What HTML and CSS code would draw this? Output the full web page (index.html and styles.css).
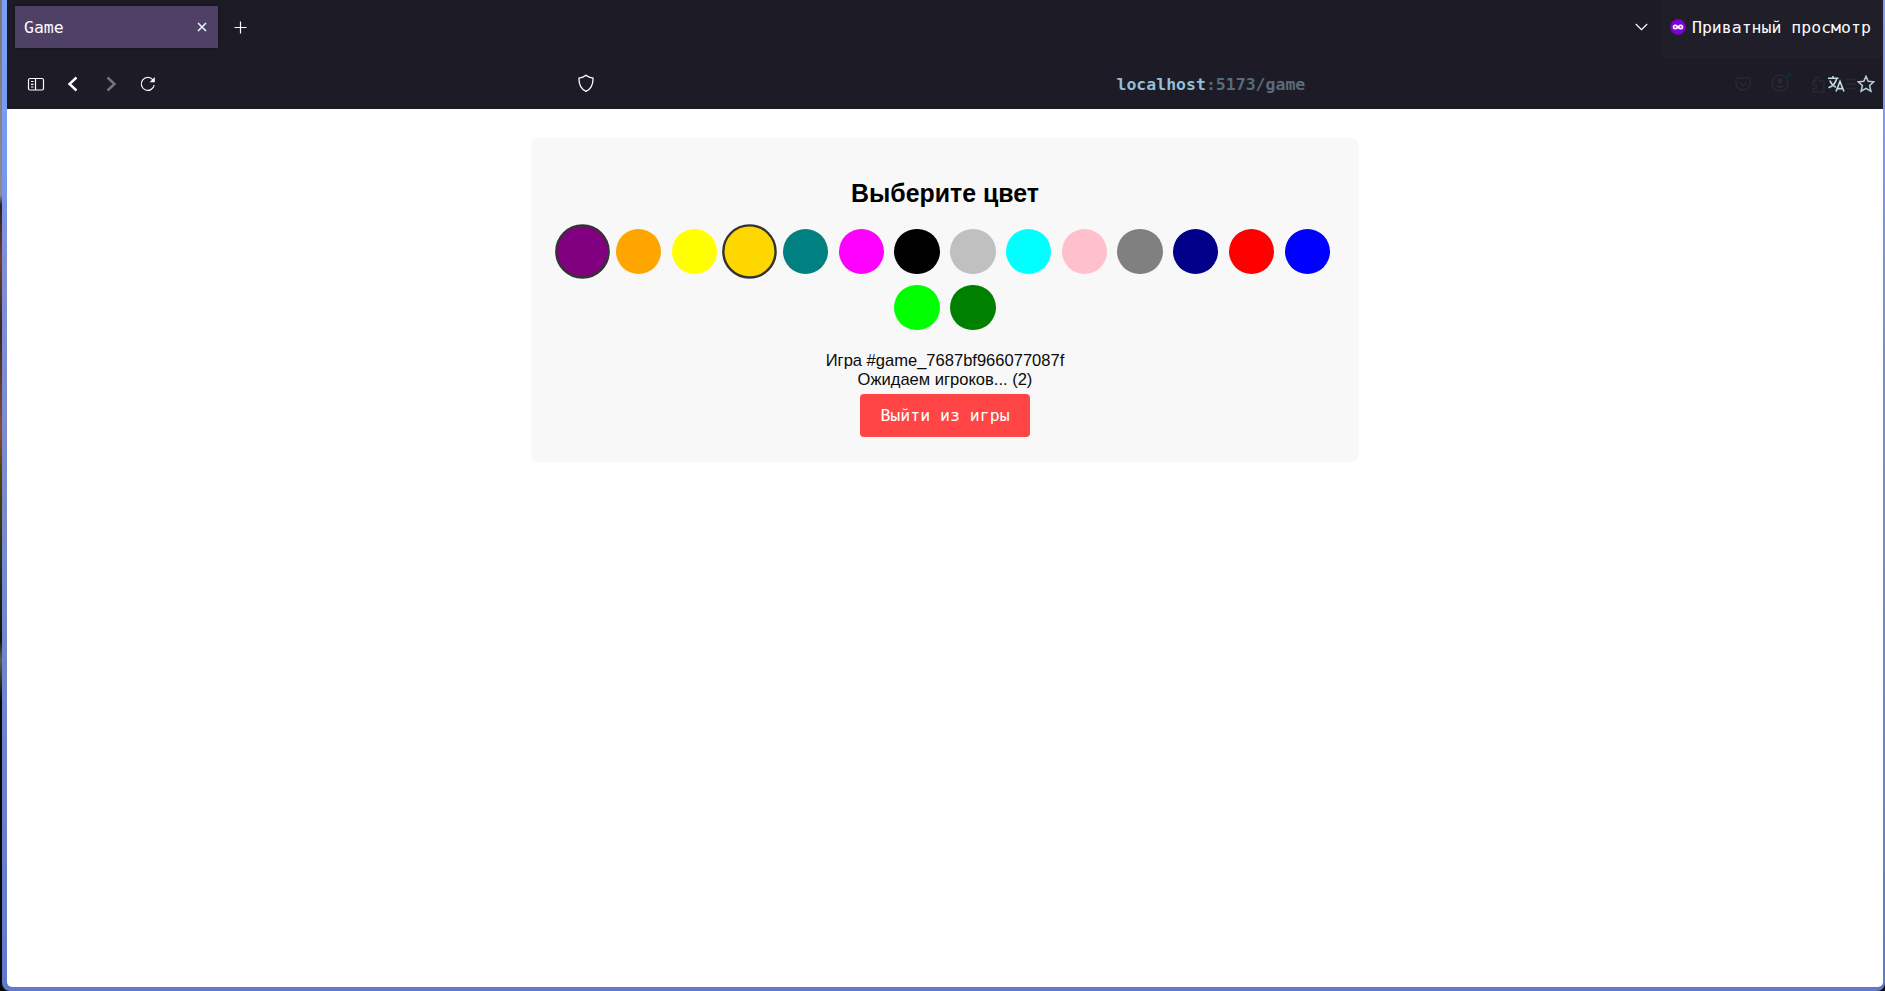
FILE: index.html
```html
<!DOCTYPE html>
<html lang="ru">
<head>
<meta charset="utf-8">
<title>Game</title>
<link rel="stylesheet" href="styles.css">
</head>
<body>
<div class="desktop">
  <div class="window">
    <header class="chrome">
      <div class="tabbar">
        <div class="tab">
          <span>Game</span>
          <svg class="tab-close" width="10" height="10" viewBox="0 0 10 10"><path d="M1 1l8 8M9 1l-8 8"/></svg>
        </div>
        <svg class="new-tab" width="13" height="13" viewBox="0 0 13 13"><path d="M6.500 .5v12M.5 6.500h12"/></svg>
        <svg class="all-tabs" width="13" height="8" viewBox="0 0 13 8"><path d="M.8 1l5.700 5.600L12.200 1"/></svg>
        <div class="private">
          <svg class="mask" width="16" height="16" viewBox="0 0 16 16"><circle cx="8" cy="8" r="7.700" fill="#8000d7"/><path d="M8 7.100C7 5.900 6.100 5.500 5.200 5.500a2.500 2.500 0 0 0 0 5c1 0 1.900-.5 2.800-1 .9.500 1.800 1 2.800 1a2.500 2.500 0 0 0 0-5C9.900 5.500 9 5.900 8 7.100z" fill="#fff"/><ellipse cx="5.400" cy="8" rx="1.200" ry=".8" fill="#8000d7"/><ellipse cx="10.600" cy="8" rx="1.200" ry=".8" fill="#8000d7"/></svg>
          <span>Приватный просмотр</span>
        </div>
      </div>
      <div class="toolbar">
        <div class="nav">
          <svg width="18" height="18" viewBox="0 0 18 18"><rect x="1.500" y="3.500" width="15" height="11.500" rx="1.500"/><path d="M8.500 3.500V15M4 6.500h2.500M4 9.300h2.500M4 12h2.500"/></svg>
          <svg class="back" width="18" height="18" viewBox="0 0 18 18"><path d="M12.500 2.500L5.500 9l7 6.500"/></svg>
          <svg class="back forward" width="18" height="18" viewBox="0 0 18 18"><path d="M5.500 2.500l7 6.500-7 6.500"/></svg>
          <svg width="18" height="18" viewBox="0 0 18 18"><path d="M15.200 10A6.500 6.500 0 1 1 14 5"/><path d="M15.800 2v5.200h-5.200z" fill="#fbfbfe" stroke="none"/></svg>
        </div>
        <svg class="shield" width="18" height="18" viewBox="0 0 18 18"><path d="M9 1.200c2 1.700 4.200 2.500 7 2.900.3 6.600-1.800 10.700-7 13.300C3.800 14.800 1.700 10.700 2 4.100 4.800 3.700 7 2.900 9 1.200z"/></svg>
        <div class="address"><b>localhost</b><span>:5173/game</span></div>
        <div class="actions">
          <svg class="ghost pocket" width="18" height="18" viewBox="0 0 18 18"><path d="M3.500 3h11a1.500 1.500 0 0 1 1.500 1.500V8a7 7 0 0 1-14 0V4.500A1.500 1.500 0 0 1 3.500 3zM5.500 7l3.500 3.500L12.500 7"/></svg>
          <svg class="ghost account" width="22" height="22" viewBox="0 0 22 22"><circle cx="10" cy="12" r="8"/><circle cx="10" cy="10" r="2.700" fill="#292933" stroke="none"/><path d="M5.500 14.500h9c-1 2.200-2.800 2.500-4.500 2.500s-3.500-.3-4.500-2.500z" fill="#292933" stroke="none"/><circle cx="19" cy="4" r="3" fill="#142631" stroke="none"/></svg>
          <svg class="ghost puzzle" width="18" height="18" viewBox="0 0 18 18"><path d="M6.500 6V4a2 2 0 0 1 4 0v2H15v11H4v-3.500h1.500a2 2 0 0 0 0-4H4V6z"/></svg>
          <svg class="translate" width="18" height="18" viewBox="0 0 18 18"><path d="M1 3.300h10.500M6 1v2.300M2.800 5.500c1.300 3.200 3.600 5.500 6 6.700M9.700 3.500C8.800 7.700 6 11 1.500 12.700M9 16.500l4-10 4 10M10.300 13.600h5.400"/></svg>
          <svg class="ghost menu" width="10" height="12" viewBox="0 0 10 12"><path d="M0 1.500h10M0 6h10M0 10.500h10"/></svg>
          <svg class="star" width="18" height="18" viewBox="0 0 18 18"><path d="M9 1.300l2.200 5 5.500.5-4.100 3.700 1.300 5.700L9 13.300l-4.900 2.900 1.300-5.700-4.100-3.700 5.500-.5z"/></svg>
        </div>
      </div>
    </header>
    <main class="page">
      <section class="card">
        <h2 class="title">Выберите цвет</h2>
        <div class="colors">
          <i class="color purple selected"></i>
          <i class="color orange"></i>
          <i class="color yellow"></i>
          <i class="color gold selected"></i>
          <i class="color teal"></i>
          <i class="color magenta"></i>
          <i class="color black"></i>
          <i class="color silver"></i>
          <i class="color cyan"></i>
          <i class="color pink"></i>
          <i class="color gray"></i>
          <i class="color navy"></i>
          <i class="color red"></i>
          <i class="color blue"></i>
          <i class="color lime"></i>
          <i class="color green"></i>
        </div>
        <div class="status">Игра #game_7687bf966077087f</div>
        <div class="status">Ожидаем игроков... (2)</div>
        <button class="leave">Выйти из игры</button>
      </section>
    </main>
  </div>
</div>
</body>
</html>
```
FILE: styles.css
```css
* { box-sizing: border-box; }
body { margin: 0; font-family: "Liberation Sans", Arial, sans-serif; }
svg { display: block; flex: none; fill: none; stroke: #fbfbfe; stroke-width: 1.2; }

.desktop {
  height: 991px;
  padding-left: 2px;
  overflow: hidden;
  background: linear-gradient(#77777c 0, #8b8b90 195px, #2b2224 205px, #6d4034 260px, #352825 330px, #8a4b38 430px, #514600 470px, #26301c 560px, #10150d 640px, #55604c 660px, #070906 700px, #080a06 100%);
}
.window {
  height: 991px;
  padding: 0 2px 4px 5px;
  border-radius: 0 0 8px 8px;
  background: linear-gradient(#7e9ff5 0, #7997ee 180px, #808fd4 260px, #7889cc 560px, #6079cb 100%);
}
.chrome { height: 109px; background: #1c1b26; color: #fbfbfe; font-family: "DejaVu Sans Mono", monospace; font-size: 16.500px; }

.tabbar { display: flex; align-items: flex-start; height: 58px; }
.tab {
  display: flex;
  align-items: center;
  justify-content: space-between;
  width: 203px;
  height: 42px;
  margin: 6px 0 0 8px;
  padding: 0 11.500px 0 9px;
  background: #4f4165;
  box-shadow: 0 0 3px rgba(0, 0, 0, .4);
}
.tab-close { stroke-width: 1.7; stroke: #e0f0f4; }
.new-tab { margin: 21px 0 0 16px; }
.all-tabs { margin: 23px 14px 0 auto; stroke-width: 1.3; }
.private {
  display: flex;
  align-items: center;
  gap: 6px;
  width: 221px;
  height: 58px;
  padding: 0 0 4px 8px;
  background: #201f29;
  white-space: nowrap;
}
.mask { stroke: none; }

.toolbar { display: flex; align-items: center; height: 51px; }
.nav { display: flex; gap: 19.300px; width: 569.500px; padding-left: 20px; }
.back { stroke-width: 2.4; }
.forward { opacity: .4; }
.shield { margin: -1px 522px 0 0; stroke-width: 1.3; }
.address { padding-top: 2px; color: #586b7c; font-weight: bold; white-space: nowrap; }
.address b { color: #93bfd8; }
.actions { display: flex; align-items: center; margin-left: auto; padding-right: 8px; }
.ghost { stroke: #292933; stroke-width: 1.5; }
.pocket { margin-right: 18px; }
.account { margin: -3px 17px 0 0; }
.puzzle { margin-right: 0; }
.translate { stroke: #c4dce2; stroke-width: 1.6; }
.menu { margin: 0 1px 0 1px; }
.star { stroke: #b5d0da; stroke-width: 1.5; }

.page { height: 878px; padding-top: 29px; background: #fff; border-radius: 0 0 5px 5px; }
.card {
  width: 828px;
  height: 324px;
  margin: 0 auto;
  padding: 41px 22px 0;
  border-radius: 8px;
  background: #f8f8f8;
  text-align: center;
}
.title { margin: 0 0 21px; font-size: 24.900px; line-height: 29px; }
.colors { display: flex; flex-wrap: wrap; justify-content: center; gap: 10.400px; margin-bottom: 21px; }
.color { width: 45.350px; height: 45.350px; border-radius: 50%; }
.selected { border: 2px solid #333; transform: scale(1.215); }
.purple { background: purple; }
.orange { background: orange; }
.yellow { background: yellow; }
.gold { background: gold; }
.teal { background: teal; }
.magenta { background: magenta; }
.black { background: black; }
.silver { background: silver; }
.cyan { background: cyan; }
.pink { background: pink; }
.gray { background: gray; }
.navy { background: darkblue; }
.red { background: red; }
.blue { background: blue; }
.lime { background: lime; }
.green { background: green; }
.status { font-size: 16.550px; line-height: 19px; color: #0a0a0a; }
.leave {
  width: 170px;
  height: 43px;
  margin-top: 5px;
  padding: 0;
  border: 0;
  border-radius: 4px;
  background: #ff4545;
  color: #fff;
  font-family: "DejaVu Sans Mono", monospace;
  font-size: 16.500px;
}
```
